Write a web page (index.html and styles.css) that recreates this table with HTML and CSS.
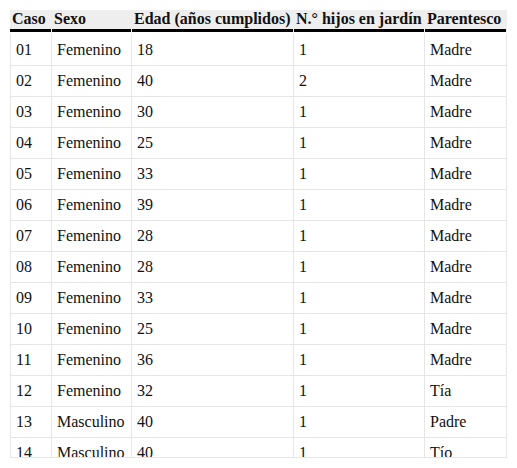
FILE: index.html
```html
<!DOCTYPE html>
<html lang="es">
<head>
<meta charset="utf-8">
<link rel="stylesheet" href="styles.css">
</head>
<body>
<div class="wrap">
<table class="data">
<colgroup>
<col class="c1"><col class="c2"><col class="c3"><col class="c4"><col class="c5">
</colgroup>
<thead>
<tr><th>Caso</th><th>Sexo</th><th>Edad (años cumplidos)</th><th>N.° hijos en jardín</th><th>Parentesco</th></tr>
</thead>
<tbody>
<tr><td>01</td><td>Femenino</td><td>18</td><td>1</td><td>Madre</td></tr>
<tr><td>02</td><td>Femenino</td><td>40</td><td>2</td><td>Madre</td></tr>
<tr><td>03</td><td>Femenino</td><td>30</td><td>1</td><td>Madre</td></tr>
<tr><td>04</td><td>Femenino</td><td>25</td><td>1</td><td>Madre</td></tr>
<tr><td>05</td><td>Femenino</td><td>33</td><td>1</td><td>Madre</td></tr>
<tr><td>06</td><td>Femenino</td><td>39</td><td>1</td><td>Madre</td></tr>
<tr><td>07</td><td>Femenino</td><td>28</td><td>1</td><td>Madre</td></tr>
<tr><td>08</td><td>Femenino</td><td>28</td><td>1</td><td>Madre</td></tr>
<tr><td>09</td><td>Femenino</td><td>33</td><td>1</td><td>Madre</td></tr>
<tr><td>10</td><td>Femenino</td><td>25</td><td>1</td><td>Madre</td></tr>
<tr><td>11</td><td>Femenino</td><td>36</td><td>1</td><td>Madre</td></tr>
<tr><td>12</td><td>Femenino</td><td>32</td><td>1</td><td>Tía</td></tr>
<tr><td>13</td><td>Masculino</td><td>40</td><td>1</td><td>Padre</td></tr>
<tr><td>14</td><td>Masculino</td><td>40</td><td>1</td><td>Tío</td></tr>
<tr><td>15</td><td>Femenino</td><td>35</td><td>1</td><td>Madre</td></tr>
</tbody>
</table>
</div>
</body>
</html>
```
FILE: styles.css
```css
html, body {
  margin: 0;
  padding: 0;
  background: #fff;
}
.wrap {
  margin: 10px 0 0 10px;
  width: 497px;
  height: 447px;
  overflow: hidden;
  border-bottom: 1px solid #e6e6e6;
}
.data {
  width: 497px;
  table-layout: fixed;
  border-collapse: separate;
  border-spacing: 0;
  font-family: "Liberation Serif", "Times New Roman", serif;
  font-size: 16px;
  color: #111;
}
.c1 { width: 42px; }
.c2 { width: 80px; }
.c3 { width: 162px; }
.c4 { width: 131px; }
.c5 { width: 82px; }
.data th {
  height: 19px;
  padding: 0 0 3px 2px;
  line-height: 17px;
  text-align: left;
  vertical-align: top;
  font-weight: bold;
  white-space: nowrap;
  background: linear-gradient(#000, #000) left bottom / calc(100% - 1px) 3px no-repeat, #eeeeee;
}
.data td {
  height: 30px;
  padding: 0 0 0 5px;
  line-height: 18px;
  vertical-align: middle;
  border-right: 1px solid #e6e6e6;
  border-bottom: 1px solid #e6e6e6;
  white-space: nowrap;
}
.data tbody tr:first-child td {
  border-top: 3px solid transparent;
}
.data td:first-child {
  border-left: 1px solid #e6e6e6;
}
```
